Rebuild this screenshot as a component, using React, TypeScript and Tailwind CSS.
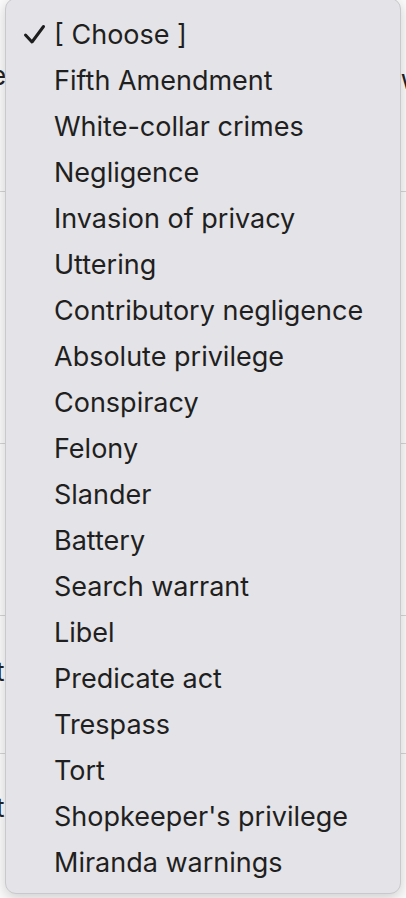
import { useState } from "react";

const OPTIONS = [
  "[ Choose ]",
  "Fifth Amendment",
  "White-collar crimes",
  "Negligence",
  "Invasion of privacy",
  "Uttering",
  "Contributory negligence",
  "Absolute privilege",
  "Conspiracy",
  "Felony",
  "Slander",
  "Battery",
  "Search warrant",
  "Libel",
  "Predicate act",
  "Trespass",
  "Tort",
  "Shopkeeper's privilege",
  "Miranda warnings",
];

function Check() {
  return (
    <svg width="23" height="21" viewBox="0 0 23 21" className="shrink-0">
      <path
        d="M2.5 11 L9 18 L20.5 2.5"
        fill="none"
        stroke="#1d1d1f"
        strokeWidth="3"
        strokeLinecap="round"
        strokeLinejoin="round"
      />
    </svg>
  );
}

export default function App() {
  const [selected, setSelected] = useState(0);

  return (
    <div
      className="relative h-[898px] w-[406px] overflow-hidden bg-[#fbfbfb] text-[#222]"
      style={{ fontFamily: "Inter, 'Noto Sans', sans-serif" }}
    >
      {/* page behind the menu */}
      <div className="flex flex-col">
        <div className="flex h-[192px] items-start justify-between border-b border-[#d4d4d4] pt-[56px] text-[26px]">
          <span className="-ml-[9px]">e</span>
          <span className="-mr-[16px] mt-[4px]">w</span>
        </div>
        <div className="h-[252px] border-b border-[#d4d4d4]" />
        <div className="h-[172px] border-b border-[#d4d4d4]" />
        <div className="flex h-[138px] items-start border-b border-[#d4d4d4] pt-[36px] text-[26px]">
          <span className="-ml-[4px]">t</span>
        </div>
        <div className="flex items-start pt-[34px] text-[26px]">
          <span className="-ml-[4px]">t</span>
        </div>
      </div>

      {/* open select menu */}
      <div className="absolute left-[5px] top-[-2px] h-[896px] w-[396px] rounded-[11px] border border-[#c9c8cc] bg-[#e4e3e7] pt-[12px] shadow-[0_4px_14px_rgba(0,0,0,0.18)]">
        <ul>
          {OPTIONS.map((opt, i) => (
            <li
              key={opt}
              onClick={() => setSelected(i)}
              className="flex h-[46px] cursor-default items-center text-[27px] leading-none text-[#1f1f21]"
            >
              <span className="flex w-[48px] justify-end pr-[8px]">
                {selected === i && <Check />}
              </span>
              <span>{opt}</span>
            </li>
          ))}
        </ul>
      </div>
    </div>
  );
}
